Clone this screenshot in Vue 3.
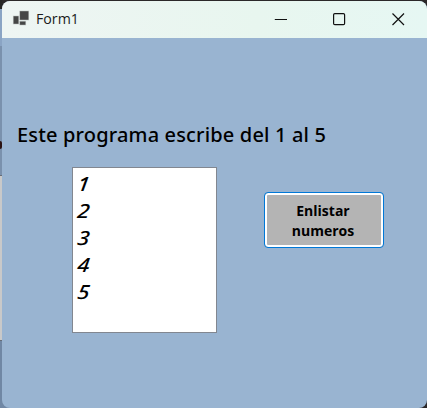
<script setup>
const numbers = [1, 2, 3, 4, 5]
</script>

<template>
  <div class="desktop">
    <aside class="behind">
      <i class="edge-top"></i>
      <i class="edge-title"></i>
      <i class="edge-body"><b class="fragment"></b></i>
      <i class="edge-list"></i>
      <i class="edge-end"></i>
    </aside>
    <main class="window">
      <header class="titlebar">
        <svg class="app-icon" width="18" height="18" viewBox="0 0 18 18">
          <g fill="#454646" stroke="#b9bebd" stroke-width="0.5">
            <rect x="7.8" y="1" width="9" height="9" />
            <rect x="1.2" y="6" width="5.6" height="8" />
            <rect x="7.8" y="11.2" width="6" height="3.8" />
          </g>
        </svg>
        <span class="title">Form1</span>
        <nav class="controls">
          <svg width="13" height="13" viewBox="0 0 13 13"><path d="M0.8 6.5H13" /></svg>
          <svg width="13" height="13" viewBox="0 0 13 13"><rect x="0.6" y="0.6" width="11" height="11" rx="1.2" /></svg>
          <svg width="13" height="13" viewBox="0 0 13 13"><path d="M0.5 0.5L12 12M12 0.5L0.5 12" /></svg>
        </nav>
      </header>
      <section class="form">
        <p class="label">Este programa escribe del 1 al 5</p>
        <div class="row">
          <ul class="list">
            <li v-for="n in numbers" :key="n"><span>{{ n }}</span></li>
          </ul>
          <button class="action">Enlistar<br />numeros</button>
        </div>
      </section>
    </main>
  </div>
</template>

<style>
body {
  margin: 0;
  overflow: hidden;
}
</style>

<style scoped>
.desktop {
  box-sizing: border-box;
  display: flex;
  width: 427px;
  height: 408px;
  background:
    linear-gradient(#7087a4, #7087a4) 0 100% / 50% 20px no-repeat,
    #2b2829;
}
.behind {
  display: flex;
  flex-direction: column;
  width: 2px;
  height: 408px;
}
.behind i {
  display: block;
}
.edge-top {
  height: 9px;
  background: #262626;
}
.edge-title {
  height: 37px;
  background: #8aa4c4;
}
.edge-body {
  height: 129px;
  background: #7a91ad;
}
.fragment {
  display: block;
  width: 2px;
  height: 8px;
  margin-left: 0;
  border-radius: 0 2px 2px 0;
  transform: translateY(95px);
  background: #2b1212;
}
.edge-list {
  box-sizing: border-box;
  height: 166px;
  border-top: 1px solid #666d78;
  border-bottom: 1px solid #666d78;
  background: #c9c9c9;
}
.edge-end {
  flex: 1;
  background: #7087a4;
}
.window {
  width: 425px;
  height: 407px;
  margin-top: 1px;
  border-radius: 8px;
  overflow: hidden;
  background: #99b4d1;
}
.titlebar {
  display: flex;
  align-items: center;
  height: 37px;
  box-sizing: border-box;
  padding: 0 22px 1px 10px;
  background: linear-gradient(90deg, #eef5f3, #e8f6ef 60%, #e6f7f3);
}
.title {
  margin-left: 6px;
  font: 14.2px/20px "Open Sans", "Noto Sans", sans-serif;
  color: #1b1b1b;
}
.controls {
  display: flex;
  gap: 46px;
  margin-left: auto;
}
.controls svg {
  fill: none;
  stroke: #111;
  stroke-width: 1.2;
}
.form {
  font-family: "Noto Sans", "Open Sans", sans-serif;
  color: #000;
}
.label {
  margin: 0;
  padding: 83px 0 0 15px;
  font-size: 20px;
  font-weight: 500;
  line-height: 28px;
  letter-spacing: 0.16px;
  white-space: nowrap;
}
.row {
  display: flex;
  align-items: flex-start;
  gap: 47px;
  padding: 18px 0 0 70px;
}
.list {
  box-sizing: border-box;
  width: 145px;
  height: 166px;
  margin: 0;
  padding: 2px 0 0 4px;
  border: 1px solid #828790;
  background: #fff;
  list-style: none;
  font-size: 19.5px;
  font-style: italic;
  font-weight: 500;
  line-height: 27px;
}
.list span {
  display: inline-block;
  transform: skewX(-7deg) scaleX(1.12);
  transform-origin: 0 70%;
}
.action {
  box-sizing: border-box;
  width: 120px;
  height: 56px;
  margin-top: 25px;
  padding: 1px 2px 0 0;
  border: 1px solid #0078d7;
  border-radius: 4px;
  background: #b4b4b4;
  box-shadow: inset 0 0 0 2px #fff;
  font: bold 14px/20px "Open Sans", "Noto Sans", sans-serif;
  color: #000;
}
</style>
